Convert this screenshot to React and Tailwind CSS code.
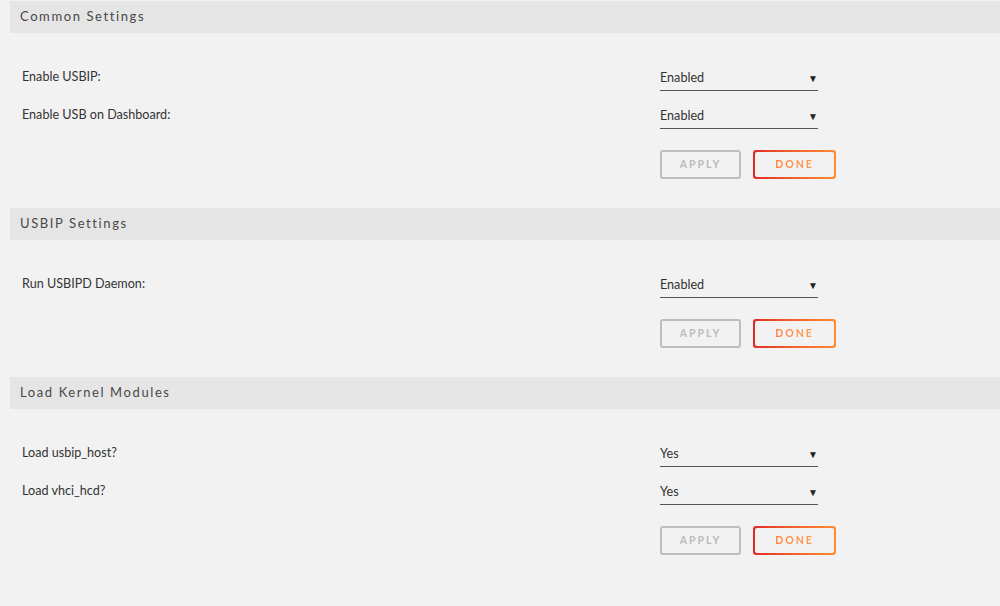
const font = { fontFamily: 'Lato, "Open Sans", "Liberation Sans", sans-serif' };

function Header({ title }) {
  return (
    <div className="ml-[10px] h-[32px] bg-[#e5e5e5] flex items-center pl-[10px]">
      <span className="text-[13px] tracking-[1.6px] text-[#484848]">{title}</span>
    </div>
  );
}

function Row({ label, value }) {
  return (
    <div className="h-[38px] flex items-center pt-[2px]">
      <div className="w-[660px] pl-[22px] text-[12.6px] text-[#333]">{label}</div>
      <div className="w-[158px] h-[27px] pt-[3px] flex items-center justify-between border-b border-[#555] text-[12.6px] text-[#333]">
        <span>{value}</span>
        <span className="text-[10px] text-[#222]">▼</span>
      </div>
    </div>
  );
}

function Buttons() {
  return (
    <div className="flex pl-[660px] gap-[12px] mt-[17px]">
      <button className="w-[81px] h-[29px] rounded-[3px] border-2 border-[#bdbdbd] text-[10.5px] font-bold tracking-[2px] text-[#bbb]">
        APPLY
      </button>
      <div className="w-[83px] h-[29px] rounded-[3px] p-[2px] bg-gradient-to-r from-[#e22828] to-[#ff8c2f]">
        <div className="w-full h-full rounded-[2px] bg-[#f2f2f2] flex items-center justify-center">
          <span className="text-[10.5px] font-bold tracking-[2px] bg-gradient-to-r from-[#ff7d3c] to-[#ffa050] bg-clip-text text-transparent">
            DONE
          </span>
        </div>
      </div>
    </div>
  );
}

function Section({ title, rows }) {
  return (
    <div className="mb-[29px]">
      <Header title={title} />
      <div className="pt-[24px]">
        {rows.map((r) => (
          <Row key={r[0]} label={r[0]} value={r[1]} />
        ))}
      </div>
      <Buttons />
    </div>
  );
}

export default function App() {
  return (
    <div className="w-[1000px] h-[606px] bg-[#f2f2f2] pt-[1px] overflow-hidden" style={font}>
      <Section
        title="Common Settings"
        rows={[
          ["Enable USBIP:", "Enabled"],
          ["Enable USB on Dashboard:", "Enabled"],
        ]}
      />
      <Section title="USBIP Settings" rows={[["Run USBIPD Daemon:", "Enabled"]]} />
      <Section
        title="Load Kernel Modules"
        rows={[
          ["Load usbip_host?", "Yes"],
          ["Load vhci_hcd?", "Yes"],
        ]}
      />
    </div>
  );
}
